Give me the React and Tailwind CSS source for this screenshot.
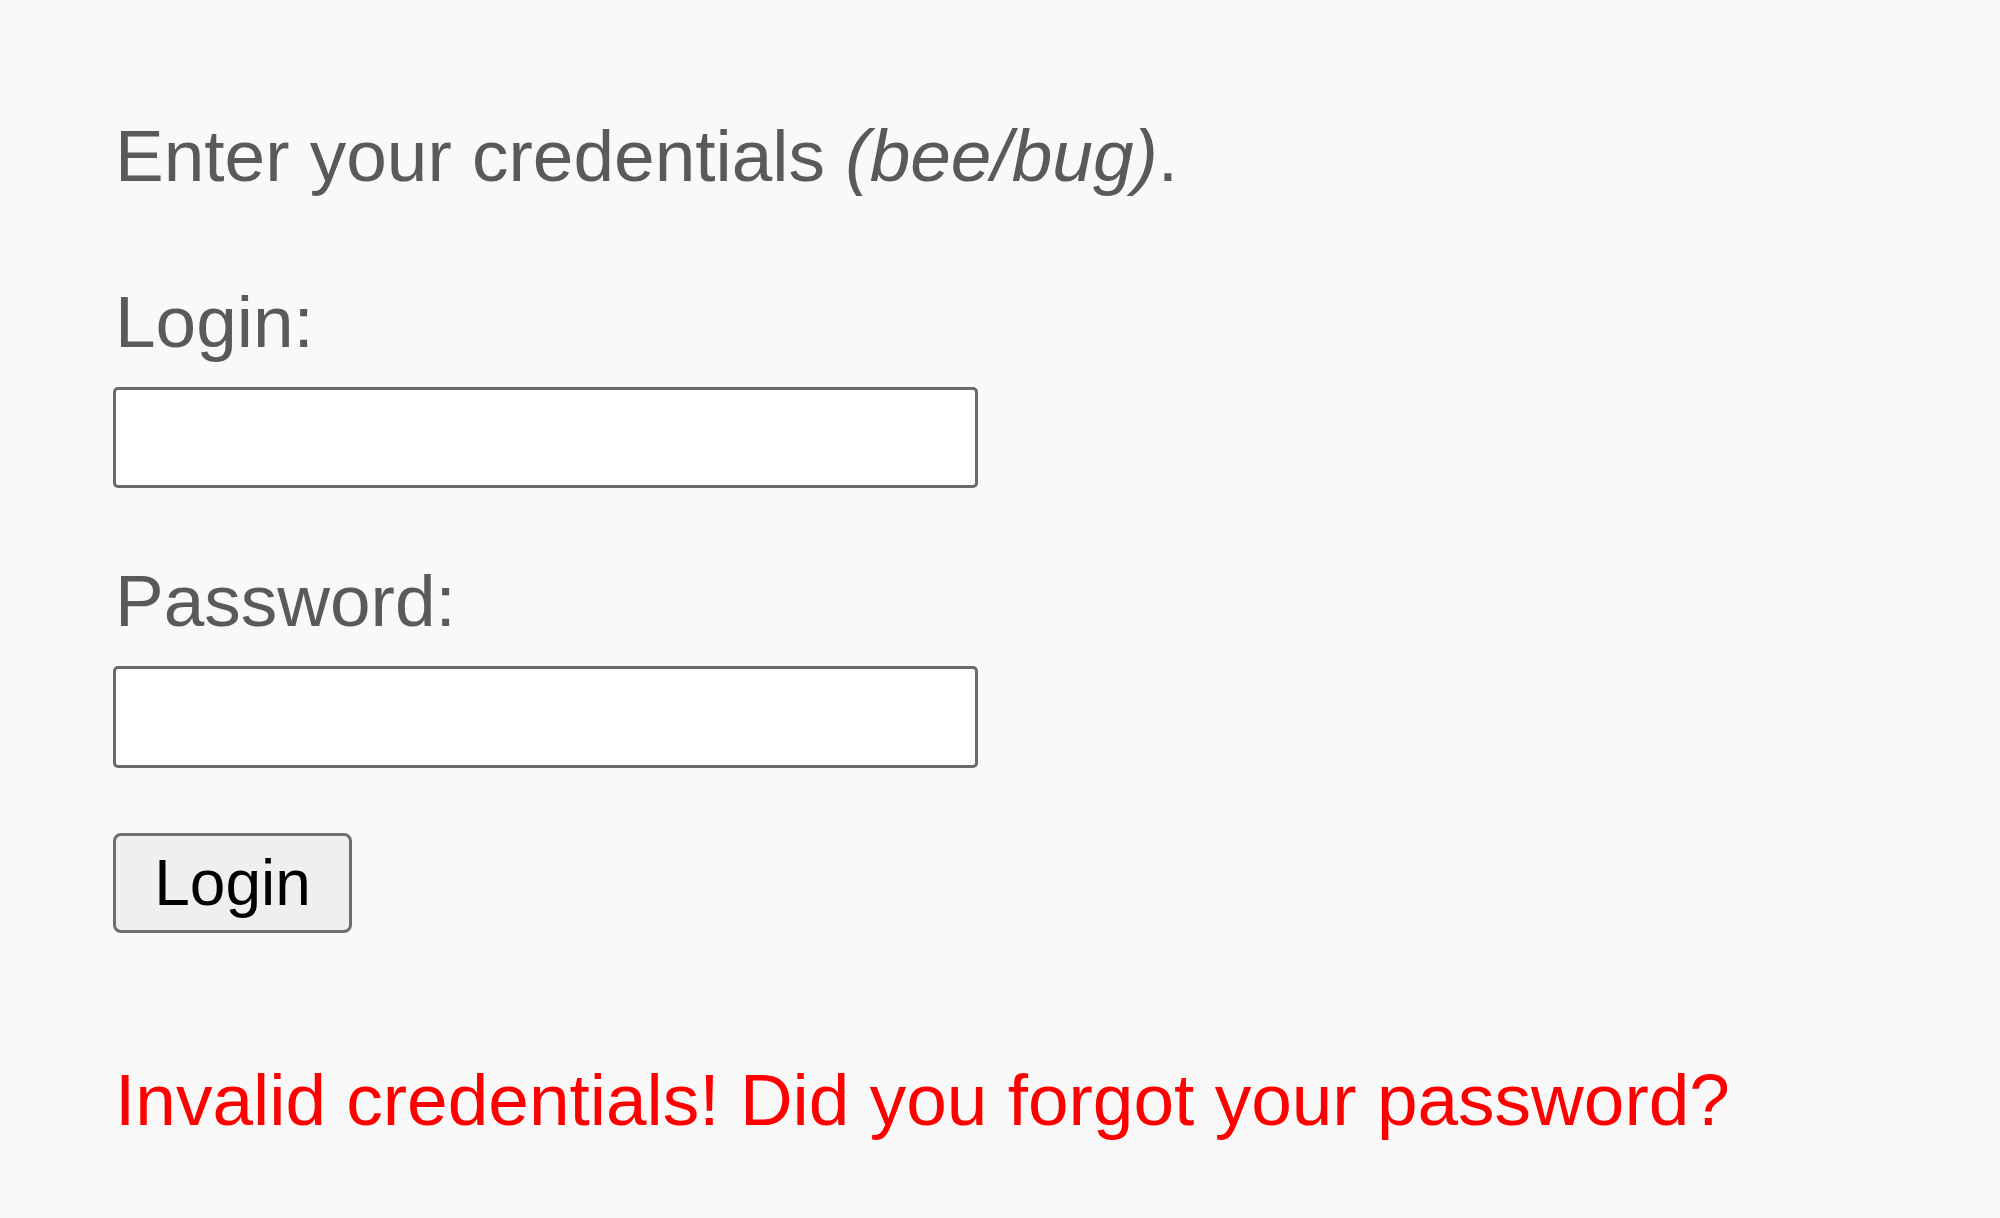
import React, { useState } from 'react';

const App = () => {
  const [login, setLogin] = useState('');
  const [password, setPassword] = useState('');

  return (
    <div className="min-h-screen w-full bg-[#f9f9f9] font-['Liberation_Sans',Arial,sans-serif]">
      <div className="flex flex-col items-start pl-[113px] pt-[114px]">
        {/* Intro */}
        <p className="ml-[2px] text-[73px] leading-[84px] text-[#5a5a5a]">
          Enter your credentials <i>(bee/bug)</i>.
        </p>

        {/* Login field */}
        <label htmlFor="login" className="ml-[2px] mt-[82px] text-[73px] leading-[84px] text-[#5a5a5a]">
          Login:
        </label>
        <input
          id="login"
          type="text"
          value={login}
          onChange={(e) => setLogin(e.target.value)}
          className="mt-[23px] h-[101px] w-[865px] rounded-[5px] border-[3px] border-[#6a6a6a] bg-white px-3 text-[60px] outline-none"
        />

        {/* Password field */}
        <label htmlFor="password" className="ml-[2px] mt-[71px] text-[73px] leading-[84px] text-[#5a5a5a]">
          Password:
        </label>
        <input
          id="password"
          type="password"
          value={password}
          onChange={(e) => setPassword(e.target.value)}
          className="mt-[23px] h-[102px] w-[865px] rounded-[5px] border-[3px] border-[#6a6a6a] bg-white px-3 text-[60px] outline-none"
        />

        <button
          type="button"
          className="mt-[65px] flex h-[100px] w-[239px] items-center justify-center rounded-[8px] border-[3px] border-[#6e6e6e] bg-[#efefef] text-[64px] leading-none text-black"
        >
          Login
        </button>

        {/* Error */}
        <p className="ml-[2px] mt-[125px] text-[73px] leading-[84px] text-[#ff0000]">
          Invalid credentials! Did you forgot your password?
        </p>
      </div>
    </div>
  );
};

export default App;
